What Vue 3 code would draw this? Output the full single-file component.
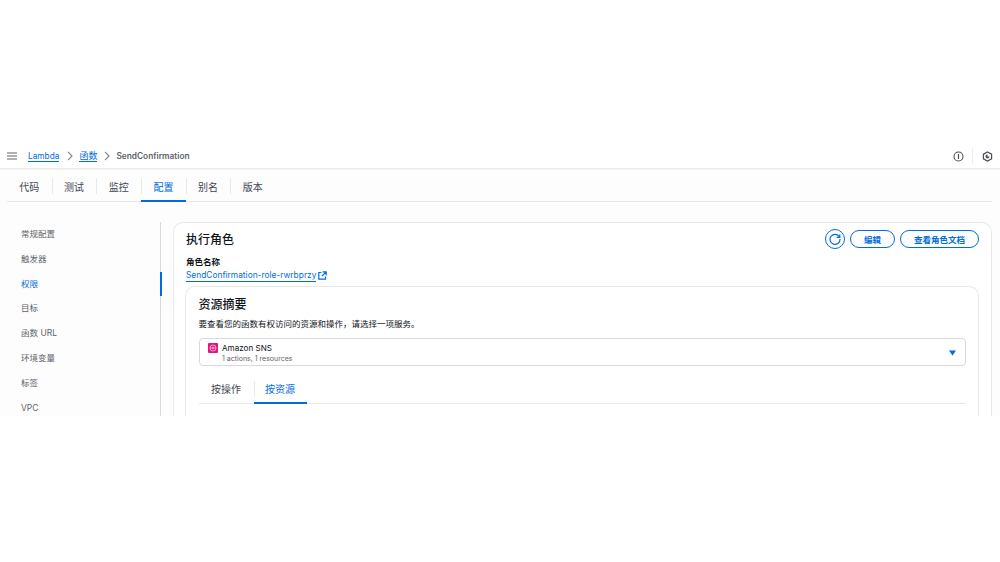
<script setup>
const tabs = [
  { label: '代码' }, { label: '测试' }, { label: '监控' },
  { label: '配置', active: true }, { label: '别名' }, { label: '版本' }
]
const navItems = [
  { label: '常规配置' }, { label: '触发器' }, { label: '权限', active: true }, { label: '目标' },
  { label: '函数 URL' }, { label: '环境变量' }, { label: '标签' }, { label: 'VPC' }
]
</script>

<template>
  <div class="page">
    <div class="screen">
      <header class="topbar">
        <div class="crumbs">
          <svg class="menu" width="10" height="8" viewBox="0 0 10 8"><path d="M0 1h10M0 4h10M0 7h10" stroke="#5f6369" stroke-width="1.2" fill="none"/></svg>
          <a class="crumb-link latin">Lambda</a>
          <svg class="chev first" width="6" height="10" viewBox="0 0 6 10"><path d="M1 .8 5 5 1 9.2" stroke="#7d8289" stroke-width="1.1" fill="none"/></svg>
          <a class="crumb-link">函数</a>
          <svg class="chev" width="6" height="10" viewBox="0 0 6 10"><path d="M1 .8 5 5 1 9.2" stroke="#7d8289" stroke-width="1.1" fill="none"/></svg>
          <span class="crumb-current">SendConfirmation</span>
        </div>
        <div class="tools">
          <svg width="11" height="11" viewBox="0 0 11 11"><circle cx="5.5" cy="5.5" r="4.5" stroke="#4b4f55" stroke-width="1.1" fill="none"/><path d="M5.5 3v5" stroke="#4b4f55" stroke-width="1.2"/></svg>
          <span class="tool-sep"></span>
          <svg width="11" height="11" viewBox="0 0 11 11"><path d="M5.5 1 9.6 3.2v4.6L5.5 10 1.4 7.8V3.2z" stroke="#4b4f55" stroke-width="1.2" fill="none"/><path d="M5.5 3.5a2 2 0 1 0 2 2H5.5z" fill="#4b4f55"/></svg>
        </div>
      </header>

      <nav class="tabs">
        <div v-for="(t, i) in tabs" :key="t.label" class="tab" :class="{ active: t.active, sep: i > 0 }">{{ t.label }}</div>
      </nav>

      <div class="body">
        <aside class="side">
          <ul class="side-list">
            <li v-for="n in navItems" :key="n.label" class="side-item" :class="{ active: n.active }">{{ n.label }}</li>
          </ul>
        </aside>

        <section class="card">
          <div class="card-head">
            <h2 class="card-title">执行角色</h2>
            <div class="actions">
              <button class="icon-btn" aria-label="刷新">
                <svg width="12" height="12" viewBox="0 0 12 12"><path d="M10.4 4A5 5 0 1 0 11 6" stroke="#006ce0" stroke-width="1.2" fill="none"/><path d="M10.8 1.4V4.4H7.8" stroke="#006ce0" stroke-width="1.2" fill="none"/></svg>
              </button>
              <button class="btn">编辑</button>
              <button class="btn btn-wide">查看角色文档</button>
            </div>
          </div>
          <div class="role-label">角色名称</div>
          <div class="role-row">
            <a class="role-link">SendConfirmation-role-rwrbprzy</a>
            <svg class="ext" width="9" height="9" viewBox="0 0 9 9"><path d="M3.4 1.5H.8v6.7h6.7V5.6M4.6.8h3.6v3.6M8 1 3.9 5.1" stroke="#006ce0" stroke-width="1.2" fill="none"/></svg>
          </div>

          <section class="inner">
            <h3 class="inner-title">资源摘要</h3>
            <p class="inner-desc">要查看您的函数有权访问的资源和操作，请选择一项服务。</p>
            <div class="select">
              <span class="svc-icon">
                <svg width="8" height="8" viewBox="0 0 8 8"><circle cx="4" cy="4" r="3" stroke="#fff" stroke-width=".6" fill="none"/><circle cx="4" cy="4" r="1" stroke="#fff" stroke-width=".5" fill="none"/><path d="M.8 4h6.4" stroke="#fff" stroke-width=".4"/></svg>
              </span>
              <div class="svc-text">
                <div class="svc-name">Amazon SNS</div>
                <div class="svc-sub">1 actions, 1 resources</div>
              </div>
              <svg class="caret" width="7" height="6" viewBox="0 0 7 6"><path d="M0 .4h7L3.5 5.6z" fill="#006ce0"/></svg>
            </div>
            <div class="subtabs">
              <div class="subtab">按操作</div>
              <div class="subtab active sep">按资源</div>
            </div>
          </section>
        </section>
      </div>
    </div>
  </div>
</template>

<style>
html, body { margin: 0; background: #fff; }
</style>

<style scoped>
.page {
  width: 1000px;
  height: 562px;
  background: #fff;
  overflow: hidden;
  padding-top: 144px;
  box-sizing: border-box;
  font-family: "Inter", "Noto Sans CJK SC", sans-serif;
}
.screen {
  height: 272px;
  overflow: hidden;
  background: #fdfdfe;
}
.topbar {
  height: 25px;
  box-sizing: border-box;
  background: #fff;
  border-bottom: 1px solid #e8e9eb;
  box-shadow: 0 1px 1px rgba(0, 0, 0, .03);
  display: flex;
  align-items: center;
  justify-content: space-between;
  padding: 0 7.5px 0 7px;
}
.crumbs { display: flex; align-items: center; font-size: 9px; }
.menu { margin-right: 11px; }
.crumb-link {
  color: #006ce0;
  border-bottom: 1px solid #006ce0;
  line-height: 10px;
}
.crumb-link.latin { font-size: 8.3px; }
.chev { margin: 0 6px 0 7px; }
.chev.first { margin-left: 8px; }
.crumb-current { color: #5f6369; font-size: 8.3px; font-weight: 600; }
.tools { display: flex; align-items: center; }
.tool-sep { width: 1px; height: 16px; background: #eceef0; margin: 0 8.5px; }
.tabs {
  height: 33px;
  box-sizing: border-box;
  margin: 0 8px 0 7px;
  border-bottom: 1px solid #e6e8ea;
  display: flex;
}
.tab {
  width: 44.7px;
  position: relative;
  text-align: center;
  font-size: 10px;
  line-height: 36px;
  color: #424650;
  box-sizing: border-box;
}
.tab.sep::before {
  content: "";
  position: absolute;
  left: 0;
  top: 9px;
  height: 16px;
  width: 1px;
  background: #e6e8ea;
}
.tab.active { color: #006ce0; }
.tab.active::after {
  content: "";
  position: absolute;
  left: 0;
  right: 0;
  bottom: -1px;
  height: 2px;
  background: #006ce0;
}
.body { display: flex; padding-top: 20px; }
.side {
  width: 161px;
  height: 220px;
  box-sizing: border-box;
  border-right: 1.5px solid #d5d8dc;
  flex: none;
  position: relative;
}
.side-list { list-style: none; margin: 0; padding: 0; }
.side-item {
  height: 24.8px;
  line-height: 24.8px;
  padding-left: 21px;
  font-size: 8.5px;
  color: #5f6369;
  position: relative;
}
.side-item.active { color: #006ce0; }
.side-item.active::after {
  content: "";
  position: absolute;
  right: -1.5px;
  top: 0;
  height: 24px;
  width: 2px;
  background: #006ce0;
}
.card {
  margin: 0 8px 0 12px;
  flex: 1;
  background: #fff;
  border: 1px solid #e6e8ea;
  border-bottom: 0;
  border-radius: 10px 10px 0 0;
  padding: 0 12px;
  height: 240px;
}
.card-head { display: flex; justify-content: space-between; align-items: center; height: 31px; margin-bottom: 2px; }
.card-title { margin: 0; font-size: 12px; font-weight: 500; color: #0f141a; }
.actions { display: flex; align-items: center; gap: 5px; }
.btn, .icon-btn {
  background: #fff;
  border: 1.5px solid #006ce0;
  border-radius: 10px;
  height: 18px;
  color: #006ce0;
  font: 600 8.5px "Inter", "Noto Sans CJK SC", sans-serif;
  padding: 0;
  box-sizing: border-box;
}
.icon-btn { width: 20px; height: 20px; border-radius: 50%; display: flex; align-items: center; justify-content: center; }
.btn { width: 45px; }
.btn-wide { width: 79px; }
.role-label { font-size: 8.5px; font-weight: 600; color: #0f141a; line-height: 12px; }
.role-row { display: flex; align-items: center; gap: 1px; height: 13px; margin-top: 1px; }
.role-link { font-size: 8.38px; color: #006ce0; border-bottom: 1px solid #006ce0; line-height: 11px; }
.ext { margin-left: 1px; }
.inner {
  margin: 4px 0 0 -1px;
  border: 1px solid #e6e8ea;
  border-bottom: 0;
  border-radius: 10px 10px 0 0;
  padding: 0 12.5px;
  height: 140px;
}
.inner-title { margin: 0; font-size: 12px; font-weight: 500; color: #0f141a; line-height: 17px; padding-top: 9px; }
.inner-desc { margin: 5px 0 0; font-size: 8.5px; color: #0f141a; line-height: 12px; }
.select {
  margin-top: 8px;
  height: 28px;
  box-sizing: border-box;
  border: 1.3px solid #d8d9dc;
  border-radius: 4px;
  display: flex;
  align-items: flex-start;
  padding: 4px 9px 0 8px;
  position: relative;
}
.svc-icon {
  width: 10px;
  height: 10px;
  margin-top: 0;
  background: #e7157b;
  border-radius: 1px;
  display: flex;
  align-items: center;
  justify-content: center;
  flex: none;
}
.svc-text { margin-left: 4.5px; flex: 1; }
.svc-name { font-size: 8.1px; line-height: 11px; color: #0f141a; }
.svc-sub { font-size: 7px; line-height: 10px; color: #5f6369; }
.caret { margin-top: 7px; }
.subtabs {
  margin-top: 9px;
  height: 29px;
  box-sizing: border-box;
  border-bottom: 1px solid #e6e8ea;
  display: flex;
}
.subtab {
  width: 55px;
  text-align: center;
  font-size: 10px;
  line-height: 29px;
  color: #424650;
  position: relative;
  box-sizing: border-box;
}
.subtab.sep::before {
  content: "";
  position: absolute;
  left: 0;
  top: 6px;
  height: 16px;
  width: 1px;
  background: #e6e8ea;
}
.subtab.active { color: #006ce0; width: 53px; }
.subtab.active::after {
  content: "";
  position: absolute;
  left: 0;
  right: 0;
  bottom: -1px;
  height: 2px;
  background: #006ce0;
}
</style>
